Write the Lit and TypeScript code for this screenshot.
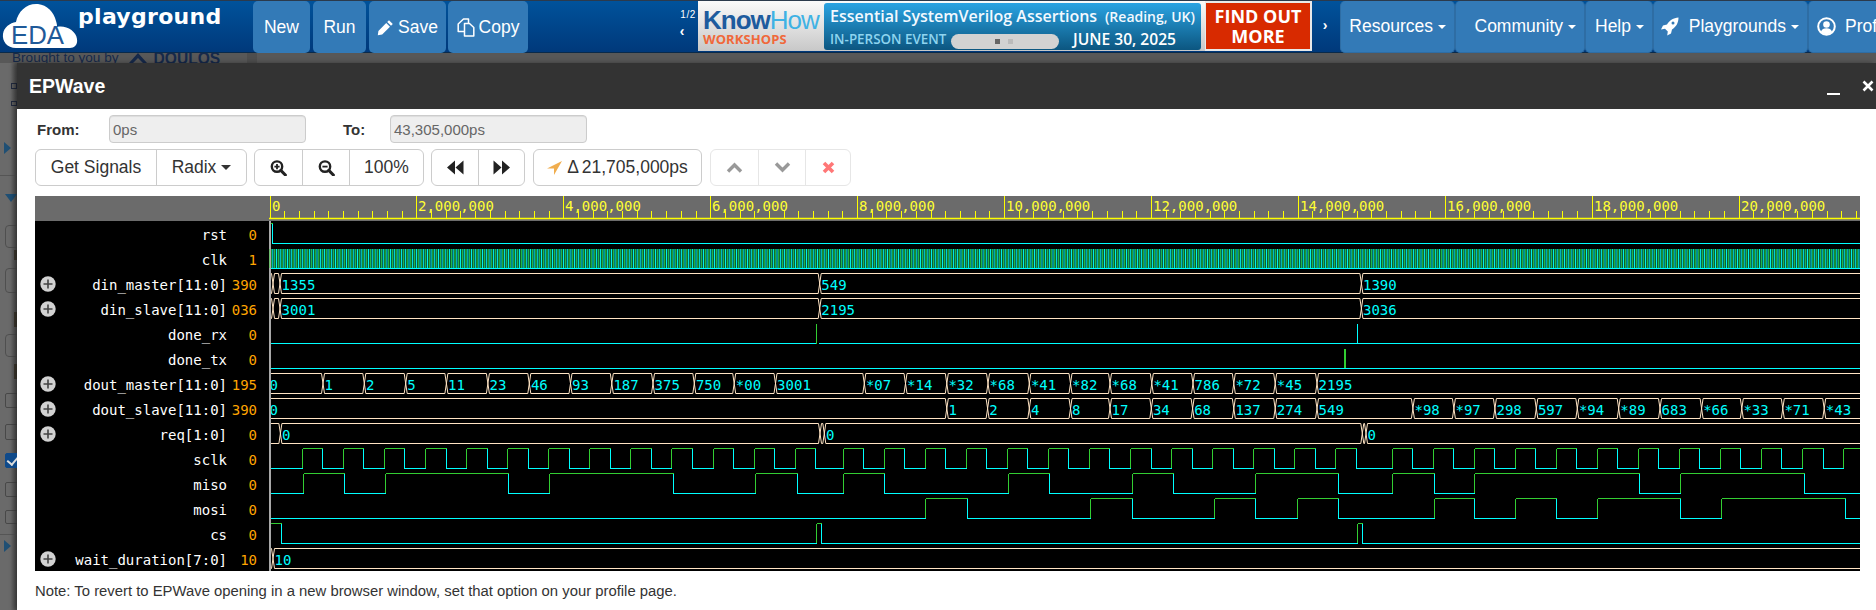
import { LitElement, html, css, svg } from "lit";
import { customElement } from "lit/decorators.js";

const END = 1860;
const hi = (i: number) => 223.5 + 25 * i;
const lo = (i: number) => 243.5 + 25 * i;
const r = (x: number) => Math.round(x) + 0.5;

let green = "";
let cyan = "";

function step(i: number, init: number, ts: number[]) {
  let x = 271;
  let lvl = init;
  for (const t0 of ts) {
    const t = r(t0);
    if (lvl) green += `M${x} ${hi(i)}H${t}`;
    else cyan += `M${x} ${lo(i)}H${t}`;
    lvl = 1 - lvl;
    const v = `M${t} ${hi(i)}V${lo(i)}`;
    if (lvl) green += v;
    else cyan += v;
    x = t;
  }
  if (lvl) green += `M${x} ${hi(i)}H${END}`;
  else cyan += `M${x} ${lo(i)}H${END}`;
}

function series(start: number, period: number, n: number, tail = true) {
  const out: number[] = [];
  for (let k = 0; k < n; k++) {
    out.push(start + k * period);
    if (k < n - 1 || tail) out.push(start + k * period + period / 2);
  }
  return out;
}

step(0, 1, [272]);
step(9, 0, [...series(301.8, 41.07, 13), ...series(842.8, 41.03, 13), ...series(1391.5, 41.05, 12, false)]);
step(10, 0, [302.5, 343.6, 385, 507.9, 549, 672.8, 755.3, 796.5, 842.8, 883.7, 1007.8, 1048.6, 1131.5, 1172.8, 1254.7, 1337.6, 1392.4, 1433.8, 1474, 1638.8, 1680, 1803.7]);
step(11, 0, [925, 966.6, 1089.9, 1131.5, 1213.6, 1254.7, 1296.6, 1337.6, 1433.8, 1474, 1515, 1556.4, 1597.4, 1679.8, 1721.2, 1845]);
step(12, 1, [281, 816.3, 821.4, 1357.2, 1362.3]);
cyan += `M271 ${lo(4)}H816M819 ${lo(4)}H${END}M1357.5 ${hi(4)}V${lo(4)}`;
green += `M816.5 ${hi(4)}V${lo(4)}`;
cyan += `M271 ${lo(5)}H${END}`;
green += `M1344.5 ${hi(5)}V${lo(5)}M1345.5 ${hi(5)}V${lo(5)}`;

let clkG = "";
let clkC = "";
{
  const P = 3.68;
  for (let x = 271; x < END; x += P) {
    clkG += `M${x} 249V268`;
    clkC += `M${x + P / 2} 249V268`;
  }
}

interface Bus {
  row: number;
  ts: number[];
  labels: (string | null)[];
}
const buses: Bus[] = [
  { row: 2, ts: [273, 280, 819.7, 1361.4], labels: [null, null, "1355", "549", "1390"] },
  { row: 3, ts: [273, 280, 819.7, 1361.4], labels: [null, null, "3001", "2195", "3036"] },
  {
    row: 6,
    ts: [323, 364.3, 405.7, 446.4, 487.9, 529.3, 570.5, 611.8, 653, 694.3, 734.2, 775.5, 864.3, 905.5, 946.8, 988, 1029.3, 1070.5, 1110, 1151.8, 1193, 1233.8, 1275.2, 1317],
    labels: ["0", "1", "2", "5", "11", "23", "46", "93", "187", "375", "750", "*00", "3001", "*07", "*14", "*32", "*68", "*41", "*82", "*68", "*41", "786", "*72", "*45", "2195"],
  },
  {
    row: 7,
    ts: [946.8, 987.6, 1029.3, 1070.5, 1110, 1151.3, 1192.6, 1233.8, 1275.2, 1317, 1412.9, 1453.9, 1494.9, 1536.3, 1577.3, 1618.7, 1660, 1701.6, 1741.8, 1782.8, 1824.2],
    labels: ["0", "1", "2", "4", "8", "17", "34", "68", "137", "274", "549", "*98", "*97", "298", "597", "*94", "*89", "683", "*66", "*33", "*71", "*43"],
  },
  { row: 8, ts: [280.4, 820, 824.3, 1362.3, 1366], labels: [null, "0", null, "0", null, "0"] },
  { row: 13, ts: [273], labels: [null, "10"] },
];

let busD = "";
const busText: { x: number; y: number; t: string }[] = [];
for (const b of buses) {
  const h = hi(b.row);
  const l = lo(b.row);
  let x = 271;
  b.ts.forEach((t) => {
    busD += `M${x} ${h}H${t - 1.5}M${x} ${l}H${t - 1.5}M${t - 1.5} ${h}L${t + 1.5} ${l}M${t - 1.5} ${l}L${t + 1.5} ${h}`;
    x = t + 1.5;
  });
  busD += `M${x} ${h}H${END}M${x} ${l}H${END}`;
  b.labels.forEach((t, i) => {
    if (!t) return;
    const sx = i === 0 ? 269.5 : b.ts[i - 1] + 1.6;
    busText.push({ x: sx, y: h + 16, t });
  });
}

const X0 = 269.5;
const PX = 73.45 / 1e6;
let minor = "";
let major = "";
const ruler: { x: number; t: string }[] = [];
for (let k = 0; k < 120; k++) {
  const x = X0 + k * 200000 * PX;
  if (x > END) break;
  const rx = r(x);
  if (k % 10 === 0) {
    major += `M${rx} 196V218`;
    const v = (k / 10) * 2000000;
    ruler.push({ x: rx + 1.5, t: v.toLocaleString("en-US") });
  } else {
    minor += `M${rx} 211V218`;
  }
}

const rows = [
  ["rst", "0", 0],
  ["clk", "1", 0],
  ["din_master[11:0]", "390", 1],
  ["din_slave[11:0]", "036", 1],
  ["done_rx", "0", 0],
  ["done_tx", "0", 0],
  ["dout_master[11:0]", "195", 1],
  ["dout_slave[11:0]", "390", 1],
  ["req[1:0]", "0", 1],
  ["sclk", "0", 0],
  ["miso", "0", 0],
  ["mosi", "0", 0],
  ["cs", "0", 0],
  ["wait_duration[7:0]", "10", 1],
] as [string, string, number][];

const gutter: [string, number, number][] = [
  ["mini", 83, 6],
  ["mini", 101, 5],
  ["tri-r", 142, 12],
  ["line", 175, 1],
  ["tri-d", 194, 8],
  ["box", 225, 23],
  ["blob", 250, 10],
  ["box", 268, 25],
  ["blob", 312, 15],
  ["box", 334, 23],
  ["blob", 364, 15],
  ["chk", 393, 15],
  ["chk", 424, 16],
  ["chk on", 453, 15],
  ["chk", 482, 15],
  ["chk", 510, 14],
  ["line", 534, 1],
  ["tri-r", 540, 12],
];

@customElement("app-root")
export class AppRoot extends LitElement {
  static styles = css`
    :host { display: block; width: 1876px; height: 610px; overflow: hidden; background: #626262; font-family: "Liberation Sans", Arial, sans-serif; color: #333; }
    * { box-sizing: border-box; }
    .nav { height: 53px; display: flex; align-items: stretch; border-top: 1px solid #2b3a4c; background: linear-gradient(#00529b, #00387a); box-shadow: inset 0 -1px #0a2a4a; color: #fff; overflow: hidden; }
    .logo { width: 253px; flex: none; display: flex; align-items: flex-start; }
    .logo-mark { width: 78px; height: 50px; flex: none; display: block; }
    .logo-word { font: bold 22px "DejaVu Sans", sans-serif; color: #fff; line-height: 26px; margin-top: 3px; letter-spacing: .3px; }
    .nb { flex: none; background: #337ab7; border-radius: 5px; display: flex; align-items: center; justify-content: center; gap: 4px; font-size: 17.5px; color: #fff; margin-right: 2px; height: 52px; }
    .w57 { width: 57px; margin-right: 3px; } .w53 { width: 53px; margin-right: 3px; } .w77 { width: 77px; } .w80 { width: 80px; }
    .spacer { width: 168px; flex: none; display: flex; flex-direction: column; align-items: flex-end; padding: 8px 2px 0 0; font-size: 10px; line-height: 12px; letter-spacing: .6px; }
    .spacer b { font-size: 14px; font-weight: bold; margin: 3px 11px 0 0; line-height: 14px; }
    .banner { width: 614px; flex: none; height: 50px; display: flex; background: linear-gradient(#fafafa, #c8c8c8); }
    .kh { width: 126px; flex: none; padding: 7px 0 0 5px; display: flex; flex-direction: column; }
    .kh-top { font-size: 26px; font-weight: bold; line-height: 24px; color: #1d5b9e; letter-spacing: -1px; white-space: nowrap; }
    .kh-top span { color: #3fb2e4; font-weight: normal; }
    .kh-sub { font: bold 13px "Open Sans", sans-serif; color: #f0683a; line-height: 14px; letter-spacing: .1px; }
    .bl { width: 377px; flex: none; margin-top: 2px; height: 47px; border-radius: 3px; background: linear-gradient(#2aa3e2, #0c5680); padding: 3px 6px 0; font-family: "Open Sans", sans-serif; display: flex; flex-direction: column; }
    .bl-a { font-size: 16px; font-weight: 600; line-height: 21px; white-space: nowrap; color: #f2f9ff; display: flex; justify-content: space-between; }
    .bl-a small { font-size: 14px; }
    .bl-b { display: flex; align-items: center; height: 23px; }
    .bl-ev { font-size: 13.4px; color: #8ed4ef; font-weight: 600; width: 121px; white-space: nowrap; flex: none; }
    .pill { width: 108px; height: 15px; border-radius: 8px; background: #d2d2d2; display: flex; align-items: center; justify-content: center; gap: 11px; margin-top: 6px; flex: none; }
    .pill i { width: 5px; height: 5px; background: #666; margin-left: -3px; }
    .pill i + i { background: #bbb; }
    .bl-dt { font-size: 15.6px; font-weight: 600; color: #fff; margin-left: 14px; white-space: nowrap; }
    .red { width: 107px; flex: none; margin-left: 4px; height: 50px; background: #d82a00; border: 2px solid #e9e9e9; border-left-width: 1px; color: #fff; font: bold 18px/20px "Open Sans", sans-serif; display: flex; flex-direction: column; align-items: center; justify-content: center; text-align: center; white-space: nowrap; }
    .nx { width: 28px; flex: none; text-align: center; font-size: 14px; font-weight: bold; line-height: 48px; padding-right: 2px; }
    .rb { flex: none; background: #337ab7; border: 1px solid #2e6da4; border-top: none; border-radius: 5px; display: flex; align-items: center; justify-content: flex-end; padding-right: 8px; font-size: 17.5px; height: 52px; white-space: nowrap; gap: 5px; }
    .caret { width: 0; height: 0; border-left: 4.5px solid transparent; border-right: 4.5px solid transparent; border-top: 4px solid #fff; flex: none; }
    .w115 { width: 115px; } .w130 { width: 130px; } .w68 { width: 68px; } .w155 { width: 155px; gap: 5px; }
    .w100 { width: 100px; justify-content: flex-start; padding-left: 8px; gap: 9px; }
    .w155 svg { margin-right: 5px; }
    .strip { height: 10px; display: flex; overflow: hidden; padding-left: 12px; color: #16294a; font-size: 13.6px; line-height: 14px; background: #585858; }
    .strip span { margin-top: -2px; white-space: nowrap; }
    .strip .dl { font: bold 15.6px/14px "Liberation Sans", sans-serif; margin: -1px 0 0 7px; }
    .strip svg { flex: none; margin-left: 10px; }
    .strip .bar { width: 10px; background: #4e4e4e; margin-left: 27px; }
    .main { display: flex; height: 547px; }
    .gutter { width: 17px; flex: none; display: flex; flex-direction: column; overflow: hidden; background: linear-gradient(90deg, #6a6a6a 60%, #505050); }
    .g { flex: none; margin-left: 5px; }
    .mini { width: 6px; margin-left: 11px; border: 1.5px solid #222b40; }
    .tri-r { width: 0; margin-left: 4px; border-left: 7px solid #1f4f74; border-top: 6px solid transparent; border-bottom: 6px solid transparent; }
    .tri-d { width: 0; border-top: 8px solid #1f4f74; border-left: 6px solid transparent; border-right: 6px solid transparent; }
    .line { margin-left: 0; background: #555; width: 100%; }
    .box { width: 20px; border: 1px solid #4f4f4f; border-radius: 4px; }
    .blob { width: 3px; margin-left: 14px; background: #3f3a30; }
    .chk { width: 20px; border: 1.5px solid #484848; border-radius: 2px; }
    .chk.on { background: #0f4a8a; border-color: #0f4a8a; position: relative; }
    .chk.on::after { content: ""; position: absolute; left: 3px; top: 1px; width: 5px; height: 8px; border: solid #ddd; border-width: 0 2px 2px 0; transform: rotate(40deg); }
    .modal { flex: 1; min-width: 0; background: #fff; box-shadow: -3px 0 5px rgba(0,0,0,.35); display: flex; flex-direction: column; }
    .mh { height: 46px; flex: none; background: #333; color: #fff; display: flex; align-items: center; padding: 0 2px 0 12px; font-size: 19.5px; font-weight: bold; }
    .mh .sp { flex: 1; }
    .mh .min { width: 13px; height: 2px; background: #fff; margin: 16px 22px 0 0; }
    .mb { padding: 6px 0 0 18px; flex: 1; display: flex; flex-direction: column; }
    .range { height: 28px; display: flex; align-items: center; font-size: 15px; font-weight: bold; }
    .range label { width: 74px; padding-left: 2px; flex: none; }
    .range label.to { width: 47px; padding-left: 0; margin-left: 37px; }
    .range .in { width: 197px; height: 28px; border: 1px solid #ccc; border-radius: 4px; background: #eee; color: #666; font-weight: normal; display: flex; align-items: center; padding-left: 3px; box-shadow: inset 0 1px 1px rgba(0,0,0,.075); }
    .tools { display: flex; gap: 7px; margin-top: 6px; height: 37px; }
    .grp { display: flex; border: 1px solid #ccc; border-radius: 6px; font-size: 17.5px; color: #333; flex: none; }
    .grp.off { border-color: #e6e6e6; }
    .grp > div { display: flex; align-items: center; justify-content: center; gap: 5px; border-left: 1px solid #ccc; white-space: nowrap; }
    .grp.off > div { border-left-color: #e6e6e6; }
    .grp > div:first-child { border-left: none; }
    .g1 { width: 120px; } .g2 { width: 90px; } .z { width: 47px; } .z46 { width: 46px; } .z74 { width: 74px; } .dlt { width: 167px; word-spacing: -1px; } .k { width: 47px; } .k45 { width: 45px; }
    .grp .cr { border-top: 5px solid #333; border-left-width: 5px; border-right-width: 5px; }
    .after { margin-left: 1px; }
    .cv { display: flex; width: 1825px; height: 375px; margin-top: 10px; background: #000; flex: none; }
    .names { width: 234px; flex: none; background: #000; }
    .names .hd { height: 25px; background: #6b6b6b; margin-bottom: 2px; }
    .row { height: 25px; display: grid; grid-template-columns: 16px 1fr 30px; align-items: center; padding: 0 12px 0 5px; font: 14px/25px "DejaVu Sans Mono", monospace; color: #fff; }
    .row .nm { text-align: right; white-space: nowrap; }
    .row .vl { text-align: right; color: #ffa500; }
    .row svg { display: block; margin-top: -4px; }
    .wave { display: block; flex: none; width: 1591px; height: 375px; }
    .note { font-size: 14.85px; margin-top: 12px; color: #333; line-height: 16px; white-space: nowrap; }
    text.m { font: 14px "DejaVu Sans Mono", monospace; }
  `;

  private plus() {
    return html`<svg width="16" height="16" viewBox="0 0 16 16"><circle cx="8" cy="8" r="7.7" fill="#d2d2d2"/><path d="M8 3.5v9M3.5 8h9" stroke="#444" stroke-width="1.6"/></svg>`;
  }

  private mag(minus: boolean) {
    return html`<svg width="17" height="16" viewBox="0 0 17 16"><circle cx="7" cy="6.6" r="5.2" fill="none" stroke="#222" stroke-width="2.4"/><path d="M10.8 10.4l4.6 4.6" stroke="#222" stroke-width="3" stroke-linecap="round"/><path d="${minus ? "M4.4 6.6h5.2" : "M4.4 6.6h5.2M7 4v5.2"}" stroke="#222" stroke-width="1.8"/></svg>`;
  }

  private waves() {
    return svg`
      <g transform="translate(-269,-196)">
        <rect x="269" y="196" width="1591" height="25" fill="#6b6b6b"/>
        <path d="M269 218.5H${END}" stroke="#ffff00" stroke-width="1.5"/>
        <path d="${minor}" stroke="#ffff00" shape-rendering="crispEdges"/>
        <path d="${major}" stroke="#ffff00" shape-rendering="crispEdges"/>
        ${ruler.map((t) => svg`<text class="m" x="${t.x}" y="211" fill="#ffff33">${t.t}</text>`)}
        <path d="${clkG}" stroke="#1fb84a" stroke-width="1.5" fill="none"/>
        <path d="${clkC}" stroke="#0ee" stroke-width="1.2" fill="none"/>
        <path d="M271 268.5H${END}" stroke="#0ff"/>
        <path d="${green}" stroke="#32cd32" fill="none" shape-rendering="crispEdges"/>
        <path d="${cyan}" stroke="#0ff" fill="none" shape-rendering="crispEdges"/>
        <path d="${busD}" stroke="#ffe4c4" fill="none"/>
        ${busText.map((t) => svg`<text class="m" x="${t.x}" y="${t.y}" fill="#0ff">${t.t}</text>`)}
        <rect x="269" y="221" width="2" height="350" fill="#a8a8a8"/>
        <rect x="268" y="249" width="1.5" height="19" fill="#32cd32"/>
      </g>`;
  }

  render() {
    let gy = 63;
    return html`
      <div class="nav">
        <div class="logo">
          <svg class="logo-mark" viewBox="0 0 78 50">
            <path d="M16 47C7 47 2 40 3 33C4 26 10 22 16 21C18 10 27 2 38 3C47 4 54 11 56 20C57 23 57 24 57 26C66 24 76 30 77 38C78 44 74 47 70 47Z" fill="#fff"/>
            <text x="11" y="43" font-family="Liberation Sans" font-size="26" fill="#1f5a99" textLength="53" lengthAdjust="spacingAndGlyphs">EDA</text>
          </svg>
          <span class="logo-word">playground</span>
        </div>
        <div class="nb w57">New</div>
        <div class="nb w53">Run</div>
        <div class="nb w77">
          <svg width="17" height="17" viewBox="0 0 17 17"><path d="M12 1.2l3.8 3.8-1.8 1.8-3.8-3.8zM9.2 4l3.8 3.8-7.8 7.8L.8 16.3 1.4 11.9z" fill="#fff"/></svg>Save
        </div>
        <div class="nb w80">
          <svg width="18" height="19" viewBox="0 0 18 19"><path d="M6.5 1h5v4.500H7.500v8H1.200V6zM7.500 5.500h5l4.300 4v8.500H7.500z" fill="none" stroke="#fff" stroke-width="1.500" stroke-linejoin="round"/></svg>Copy
        </div>
        <div class="spacer">1/2<b>‹</b></div>
        <div class="banner">
          <div class="kh">
            <div class="kh-top">Know<span>How</span></div>
            <div class="kh-sub">WORKSHOPS</div>
          </div>
          <div class="bl">
            <div class="bl-a"><span>Essential SystemVerilog Assertions</span><small>(Reading, UK)</small></div>
            <div class="bl-b">
              <span class="bl-ev">IN-PERSON EVENT</span>
              <span class="pill"><i></i><i></i></span>
              <span class="bl-dt">JUNE 30, 2025</span>
            </div>
          </div>
          <div class="red"><span>FIND OUT</span><span>MORE</span></div>
        </div>
        <div class="nx">›</div>
        <div class="rb w115">Resources<span class="caret"></span></div>
        <div class="rb w130">Community<span class="caret"></span></div>
        <div class="rb w68">Help<span class="caret"></span></div>
        <div class="rb w155">
          <svg width="18" height="19" viewBox="0 0 18 19"><path fill-rule="evenodd" d="M17.500.500C12.500.800 8.500 3.500 6 7.500L2 8.500 0 12.500 4 11.800 6.800 14.600 6.200 18.500 10 16.500 11 12.500C15 10 17.500 6 17.500.500ZM12 4.500a1.500 1.500 0 1 1 0 3 1.500 1.500 0 0 1 0-3Z" fill="#fff"/></svg>Playgrounds<span class="caret"></span>
        </div>
        <div class="rb w100">
          <svg width="19" height="19" viewBox="0 0 19 19"><circle cx="9.500" cy="9.500" r="8.300" fill="none" stroke="#fff" stroke-width="2"/><circle cx="9.500" cy="7.500" r="3.300" fill="#fff"/><path d="M3.800 15c1-3 3-3.800 5.700-3.800s4.700.8 5.700 3.800c-3 3-8.400 3-11.400 0z" fill="#fff"/></svg>Profile
        </div>
      </div>
      <div class="strip">
        <span>Brought to you by</span>
        <svg width="18" height="10" viewBox="0 0 18 10"><path d="M9 0L18 10H14L9 5 4 10H0z" fill="#16294a"/></svg>
        <span class="dl">DOULOS</span>
        <div class="bar"></div>
      </div>
      <div class="main">
        <div class="gutter">
          ${gutter.map(([c, y, h]) => {
            const m = y - gy;
            gy = y + h;
            return html`<div class="g ${c}" style="margin-top:${m}px;height:${h}px"></div>`;
          })}
        </div>
        <div class="modal">
          <div class="mh">EPWave<span class="sp"></span><span class="min"></span>
            <svg width="12" height="12" viewBox="0 0 12 12"><path d="M1.500 1.500l9 9M10.500 1.500l-9 9" stroke="#fff" stroke-width="2.600"/></svg>
          </div>
          <div class="mb">
            <div class="range">
              <label>From:</label><div class="in">0ps</div>
              <label class="to">To:</label><div class="in">43,305,000ps</div>
            </div>
            <div class="tools">
              <div class="grp">
                <div class="g1">Get Signals</div>
                <div class="g2">Radix<span class="caret cr"></span></div>
              </div>
              <div class="grp">
                <div class="z">${this.mag(false)}</div>
                <div class="z">${this.mag(true)}</div>
                <div class="z74">100%</div>
              </div>
              <div class="grp">
                <div class="z46"><svg width="17" height="15" viewBox="0 0 17 14"><path d="M8 0v14L0 7zM16.500 0v14L8.500 7z" fill="#222"/></svg></div>
                <div class="z46"><svg width="17" height="15" viewBox="0 0 17 14"><path d="M.500 0v14L8.500 7zM9 0v14l8-7z" fill="#222"/></svg></div>
              </div>
              <div class="grp after">
                <div class="dlt"><svg width="15" height="14" viewBox="0 0 15 14"><path d="M15 0L0 7.500H7V14z" fill="#f0ad4e"/></svg>Δ 21,705,000ps</div>
              </div>
              <div class="grp off after">
                <div class="k"><svg width="17" height="11" viewBox="0 0 17 11"><path d="M2 9.500l6.500-6.500L15 9.500" fill="none" stroke="#999" stroke-width="3.400"/></svg></div>
                <div class="k"><svg width="17" height="11" viewBox="0 0 17 11"><path d="M2 1.500l6.500 6.500L15 1.500" fill="none" stroke="#999" stroke-width="3.400"/></svg></div>
                <div class="k45"><svg width="13" height="13" viewBox="0 0 13 13"><path d="M2 2l9 9M11 2l-9 9" stroke="#f77" stroke-width="3.600"/></svg></div>
              </div>
            </div>
            <div class="cv">
              <div class="names">
                <div class="hd"></div>
                ${rows.map(
                  ([n, v, e]) => html`<div class="row"><span>${e ? this.plus() : ""}</span><span class="nm">${n}</span><span class="vl">${v}</span></div>`
                )}
              </div>
              <svg class="wave" viewBox="0 0 1591 375">${this.waves()}</svg>
            </div>
            <div class="note">Note: To revert to EPWave opening in a new browser window, set that option on your profile page.</div>
          </div>
        </div>
      </div>
    `;
  }
}
